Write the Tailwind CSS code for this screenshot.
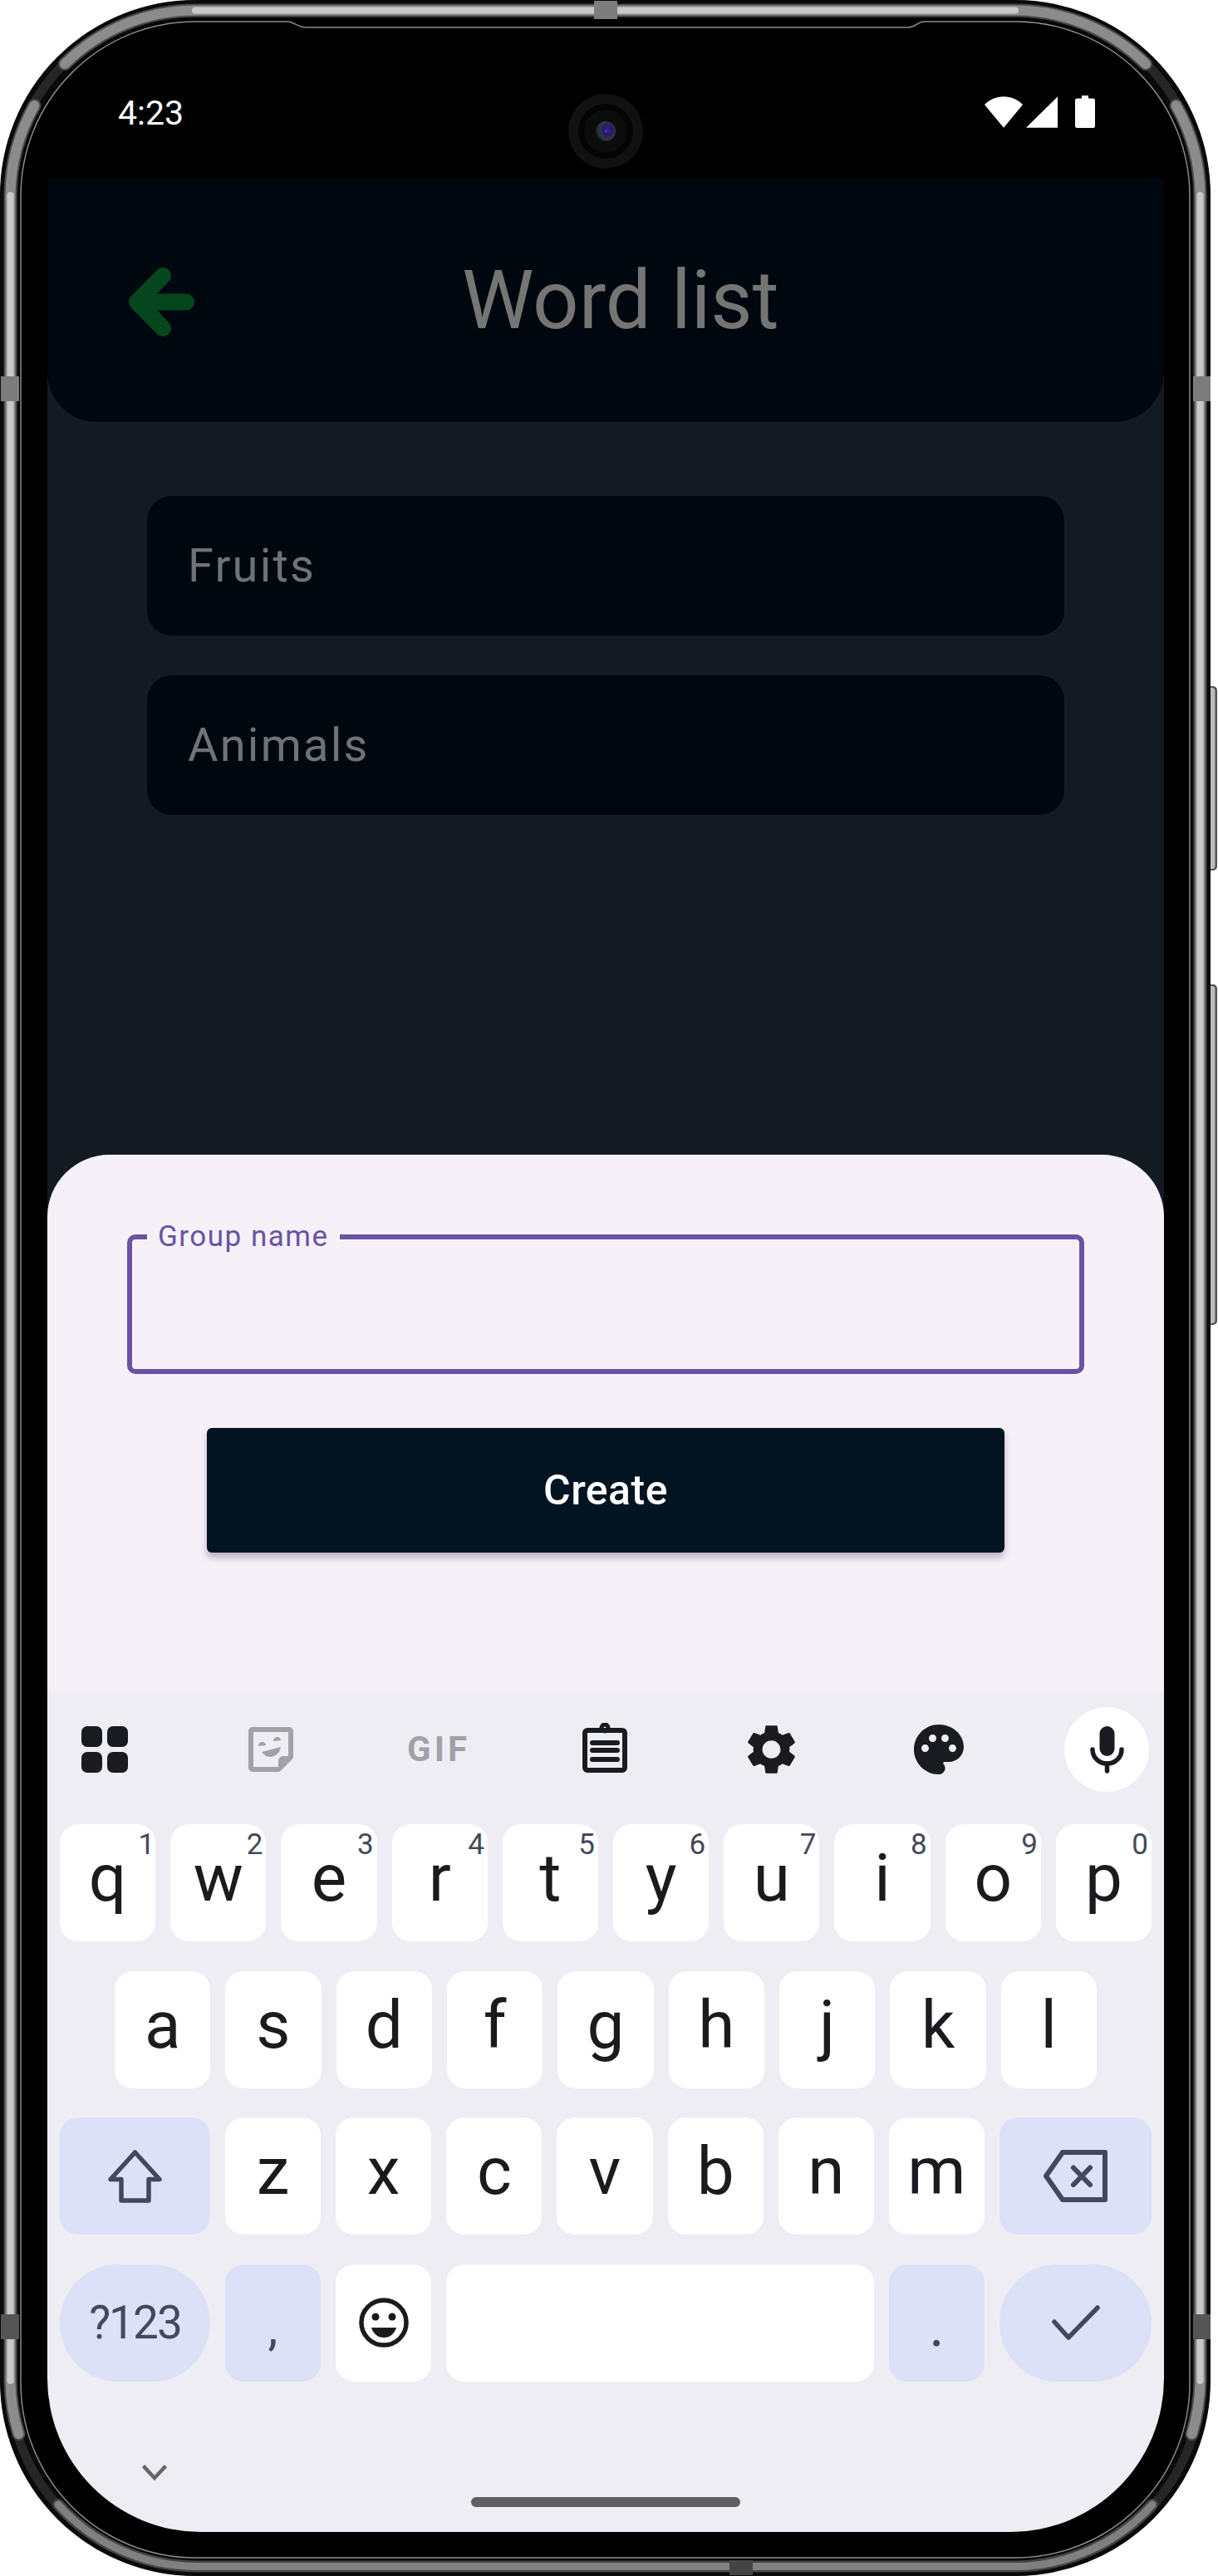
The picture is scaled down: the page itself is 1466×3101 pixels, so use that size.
<!doctype html>
<html lang="en">
  <head>
    <meta charset="UTF-8" />
    <title>Word list</title>
    <script src="https://cdn.jsdelivr.net/npm/@tailwindcss/browser@4"></script>
  </head>

  <body class="bg-white font-['Roboto',sans-serif]">
    <div class="relative w-[1466px] h-[3101px] overflow-hidden">
      <!-- phone frame -->
      <svg class="absolute inset-0" width="1466" height="3101" viewBox="0 0 1466 3101" fill="none">
        <!-- side buttons -->
        <rect x="1450" y="826" width="15" height="222" rx="5" fill="#555" />
        <rect x="1450" y="828" width="12.5" height="218" rx="4" fill="#bbb" />
        <rect x="1450" y="1185" width="15" height="410" rx="5" fill="#555" />
        <rect x="1450" y="1187" width="12.5" height="406" rx="4" fill="#bbb" />

        <rect x="0.5" y="0.5" width="1456" height="3100" rx="235" fill="#000" />
        <rect x="11.5" y="11.5" width="1434" height="3078" rx="223.5" stroke="#0a0a0a" stroke-width="23" />
        <rect x="11.5" y="11.5" width="1434" height="3078" rx="223.5" stroke="#262626" stroke-width="11" />

        <g stroke-linecap="round">
          <g stroke="#4a4a4a" stroke-width="16">
            <path d="M78 77A223.5 223.5 0 0 1 235 12.5H1222A223.5 223.5 0 0 1 1379 77" />
            <path d="M41.4 127A223.5 223.5 0 0 0 12.5 235V2866A223.5 223.5 0 0 0 22.4 2930" />
            <path d="M1415.6 127A223.5 223.5 0 0 1 1444.5 235V2866A223.5 223.5 0 0 1 1434.6 2930" />
          </g>
          <g stroke="#8c8c8c" stroke-width="12">
            <path d="M78 77A223.5 223.5 0 0 1 235 12.5H1222A223.5 223.5 0 0 1 1379 77" />
            <path d="M41.4 127A223.5 223.5 0 0 0 12.5 235V2866A223.5 223.5 0 0 0 22.4 2930" />
            <path d="M1415.6 127A223.5 223.5 0 0 1 1444.5 235V2866A223.5 223.5 0 0 1 1434.6 2930" />
          </g>
          <g stroke="#c8c8c8" stroke-width="8">
            <path d="M235 12.5H1222" />
            <path d="M12.5 235V2866" />
            <path d="M1444.5 235V2866" />
          </g>
          <path d="M70 3015A223.5 223.5 0 0 0 235 3089.5H1222A223.5 223.5 0 0 0 1387 3015" stroke="#444" stroke-width="14" />
          <path d="M70 3015A223.5 223.5 0 0 0 235 3089.5H1222A223.5 223.5 0 0 0 1387 3015" stroke="#808080" stroke-width="9" />
        </g>

        <!-- antenna joints -->
        <rect x="715" y="1" width="28" height="22" fill="#7d7d7d" />
        <rect x="1" y="453" width="22" height="30" fill="#7d7d7d" />
        <rect x="1436" y="453" width="21" height="30" fill="#7d7d7d" />
        <rect x="1" y="2786" width="22" height="30" fill="#555" />
        <rect x="1436" y="2786" width="21" height="30" fill="#555" />
        <rect x="878" y="3082" width="28" height="18" fill="#444" />

        <!-- inner hairline with the top notch -->
        <path
          d="M25 235A210 210 0 0 1 235 26H346C354 26 358 33 369 33H1093C1103 33 1104 26 1112 26H1222A210 210 0 0 1 1432 235V2869A210 210 0 0 1 1222 3079H235A210 210 0 0 1 25 2869Z"
          stroke="#8a8a8a"
          stroke-width="1.5"
        />
      </svg>

      <div class="relative w-[1457px] h-[3101px] flex flex-col pl-[57px] pr-[56px] pb-[53px]">
        <!-- status bar -->
        <div class="relative -ml-[57px] -mr-[56px] h-[215px] shrink-0 flex items-start pl-[142px] pr-[139px] text-white">
          <span class="mt-[112px] text-[41px] leading-[48px]">4:23</span>
          <svg class="absolute left-[684px] top-[113px]" width="90" height="90" viewBox="0 0 90 90">
            <defs>
              <radialGradient id="lens" cx="0.6" cy="0.45" r="0.6">
                <stop offset="0" stop-color="#3a1fb0" />
                <stop offset="0.35" stop-color="#2a1a5c" />
                <stop offset="0.75" stop-color="#2a3a48" />
                <stop offset="1" stop-color="#141c20" />
              </radialGradient>
            </defs>
            <circle cx="45" cy="45" r="45" fill="#111" />
            <circle cx="45" cy="45" r="33" fill="#040404" />
            <circle cx="45" cy="45" r="26" fill="#0c0c0c" />
            <circle cx="45" cy="45" r="12" fill="url(#lens)" />
            <circle cx="45" cy="45" r="1.5" fill="#4a2de0" />
          </svg>
          <div class="ml-auto mt-[115px] flex items-start">
            <svg class="mt-[1px]" width="46" height="38" viewBox="0 0 45.5 37" fill="#fff">
              <path d="M22.75 37L0 9.5C6 3.5 14 0 22.75 0C31.5 0 39.5 3.5 45.5 9.5Z" />
            </svg>
            <svg class="ml-[4px] mt-[1px]" width="38" height="38" viewBox="0 0 37.5 37" fill="#fff">
              <path d="M37.5 0V37H0Z" />
            </svg>
            <svg class="ml-[21px]" width="24" height="39" viewBox="0 0 24 39" fill="#fff">
              <path d="M8 0H16V3.5H21.5A2.5 2.5 0 0 1 24 6V36.5A2.5 2.5 0 0 1 21.5 39H2.5A2.5 2.5 0 0 1 0 36.5V6A2.5 2.5 0 0 1 2.5 3.5H8Z" />
            </svg>
          </div>
        </div>

        <!-- screen -->
        <div class="flex-1 flex flex-col overflow-hidden rounded-b-[185px] bg-[#131a22]">
          <!-- app bar -->
          <div class="h-[293px] shrink-0 flex items-center pl-[98px] rounded-b-[60px] bg-[#00070e]">
            <svg class="mb-[-3px]" width="79" height="83" viewBox="0 0 79 83" fill="none" stroke="#05461e" stroke-width="20" stroke-linecap="round" stroke-linejoin="round">
              <path d="M41 10L10 41.5L41 73" />
              <path d="M10 41.5H69" />
            </svg>
            <span class="ml-[322px] text-[97.5px] leading-[112px] text-[#757575]">Word list</span>
          </div>

          <!-- word groups -->
          <div class="flex-1 flex flex-col gap-[48px] pt-[89px] pl-[120px] pr-[120px]">
            <div class="h-[168px] flex items-center pl-[49px] rounded-[30px] bg-[#00070e] text-[56px] tracking-[2.2px] text-[#6f7276]">Fruits</div>
            <div class="h-[168px] flex items-center pl-[49px] rounded-[30px] bg-[#00070e] text-[56px] tracking-[2.2px] text-[#6f7276]">Animals</div>
          </div>

          <!-- bottom sheet -->
          <div class="h-[650px] shrink-0 flex flex-col rounded-t-[75px] bg-[#f6f1f9]">
            <div class="relative mt-[96px] mx-[96px] h-[168px] rounded-[10px] border-[6px] border-[#6952a4]">
              <span class="absolute -top-[18px] left-[18px] px-[13px] bg-[#f6f1f9] text-[35px] leading-[30px] tracking-[1.5px] text-[#6952a4]">Group name</span>
            </div>
            <button class="mt-[65px] mx-auto w-[960px] h-[150px] rounded-[6px] bg-[#021322] text-white text-[50px] font-medium tracking-[0.5px] shadow-[0_6px_9px_rgba(40,30,70,0.3)]">Create</button>
            <div class="mt-auto h-[10px] bg-linear-to-b from-transparent to-[#eeedf3]"></div>
          </div>

          <!-- keyboard -->
          <div class="h-[1008px] shrink-0 flex flex-col bg-[#eeedf4] pt-[15px]">
            <div class="h-[102px] shrink-0 flex items-center mb-[39px]">
              <div class="ml-[41px] w-[56px] h-[56px] grid grid-cols-2 gap-[6px]">
                <div class="rounded-[7px] bg-[#1a1b20]"></div>
                <div class="rounded-[7px] bg-[#1a1b20]"></div>
                <div class="rounded-[7px] bg-[#1a1b20]"></div>
                <div class="rounded-[7px] bg-[#1a1b20]"></div>
              </div>
              <svg class="ml-[145px]" width="54" height="54" viewBox="0 0 54 54" fill="#a2a1a8">
                <path fill-rule="evenodd" d="M5 0H49A5 5 0 0 1 54 5V36A4 4 0 0 1 53 38.5L39 52.5A4 4 0 0 1 36 54H5A5 5 0 0 1 0 49V5A5 5 0 0 1 5 0ZM6 6V48H36V41A6 6 0 0 1 42 35H48V6Z" />
                <path d="M16 30L39 24C38 32 31 36 26 36C22 36 18 33 16 30Z" />
                <path d="M12 23C12 19 15 18 17 18C19 18 21 20 21 22Z" />
                <path d="M30 17C30 14 33 12 35 12C37 12 39 14 39 16Z" />
              </svg>
              <span class="ml-[137px] w-[72px] text-center text-[42px] leading-[30px] font-bold tracking-[4px] text-[#a2a1a8]">GIF</span>
              <svg class="ml-[139px] -mt-[4px]" width="54" height="60" viewBox="0 0 54 60" fill="none" stroke="#1a1b20" stroke-width="6" stroke-linecap="round">
                <rect x="3" y="9" width="48" height="48" rx="3" />
                <path d="M12 24H42M12 33H42M12 44H42" />
                <path d="M16 9H38" />
                <circle cx="27" cy="6" r="4" stroke-width="5" />
              </svg>
              <svg class="ml-[145px]" width="57" height="60" viewBox="2.6 2 18.8 20" preserveAspectRatio="none" fill="#1a1b20">
                <path d="M19.14 12.94c.04-.3.06-.61.06-.94 0-.32-.02-.64-.07-.94l2.03-1.58c.18-.14.23-.41.12-.61l-1.92-3.32c-.12-.22-.37-.29-.59-.22l-2.39.96c-.5-.38-1.03-.7-1.62-.94l-.36-2.54c-.04-.24-.24-.41-.48-.41h-3.84c-.24 0-.43.17-.47.41l-.36 2.54c-.59.24-1.13.57-1.62.94l-2.39-.96c-.22-.08-.47 0-.59.22L2.74 8.87c-.12.21-.08.47.12.61l2.03 1.58c-.05.3-.09.63-.09.94s.02.64.07.94l-2.03 1.58c-.18.14-.23.41-.12.61l1.92 3.32c.12.22.37.29.59.22l2.39-.96c.5.38 1.03.7 1.62.94l.36 2.54c.05.24.24.41.48.41h3.84c.24 0 .44-.17.47-.41l.36-2.54c.59-.24 1.13-.56 1.62-.94l2.39.96c.22.08.47 0 .59-.22l1.92-3.32c.12-.22.07-.47-.12-.61l-2.01-1.58zM12 15.6c-1.98 0-3.6-1.62-3.6-3.6s1.62-3.6 3.6-3.6 3.6 1.62 3.6 3.6-1.62 3.6-3.6 3.6z" />
              </svg>
              <svg class="ml-[143px]" width="60" height="60" viewBox="2 2 20 20" fill="#1a1b20">
                <path d="M12 2C6.49 2 2 6.49 2 12s4.49 10 10 10c1.38 0 2.5-1.12 2.5-2.5 0-.61-.23-1.2-.64-1.67-.08-.1-.13-.21-.13-.33 0-.28.22-.5.5-.5H16c3.31 0 6-2.69 6-6 0-4.96-4.49-9-10-9zm-5.5 11c-.83 0-1.5-.67-1.5-1.5S5.67 10 6.5 10s1.5.67 1.5 1.5S7.33 13 6.5 13zm3-4C8.67 9 8 8.33 8 7.5S8.67 6 9.5 6s1.5.67 1.5 1.5S10.33 9 9.5 9zm5 0c-.83 0-1.5-.67-1.5-1.5S13.67 6 14.5 6s1.5.67 1.5 1.5S15.33 9 14.5 9zm3 4c-.83 0-1.5-.67-1.5-1.5s.67-1.5 1.5-1.5 1.5.67 1.5 1.5-.67 1.5-1.5 1.5z" />
              </svg>
              <div class="ml-[121px] w-[102px] h-[102px] flex items-center justify-center rounded-full bg-white">
                <svg width="41" height="57" viewBox="0 0 41 57" fill="none" stroke="#1a1b20" stroke-linecap="round">
                  <rect x="11.5" y="0" width="18" height="36" rx="9" fill="#1a1b20" stroke="none" />
                  <path d="M3 28C3 38 11 45 20.5 45C30 45 38 38 38 28" stroke-width="5.5" />
                  <path d="M20.5 45V54" stroke-width="5.5" />
                </svg>
              </div>
            </div>

            <!-- keys -->
            <div class="flex flex-col gap-[35.5px] px-[15px] text-[#1b1b1f]">
              <div class="grid grid-cols-10 gap-[18px]">
                <div class="relative h-[141px] flex justify-center rounded-[22px] bg-white text-[80px] leading-[131px]">q<span class="absolute top-[5px] right-[1px] text-[35px] leading-[40px] text-[#45485a]">1</span></div>
                <div class="relative h-[141px] flex justify-center rounded-[22px] bg-white text-[80px] leading-[131px]">w<span class="absolute top-[5px] right-[4px] text-[35px] leading-[40px] text-[#45485a]">2</span></div>
                <div class="relative h-[141px] flex justify-center rounded-[22px] bg-white text-[80px] leading-[131px]">e<span class="absolute top-[5px] right-[4px] text-[35px] leading-[40px] text-[#45485a]">3</span></div>
                <div class="relative h-[141px] flex justify-center rounded-[22px] bg-white text-[80px] leading-[131px]">r<span class="absolute top-[5px] right-[4px] text-[35px] leading-[40px] text-[#45485a]">4</span></div>
                <div class="relative h-[141px] flex justify-center rounded-[22px] bg-white text-[80px] leading-[131px]">t<span class="absolute top-[5px] right-[4px] text-[35px] leading-[40px] text-[#45485a]">5</span></div>
                <div class="relative h-[141px] flex justify-center rounded-[22px] bg-white text-[80px] leading-[131px]">y<span class="absolute top-[5px] right-[4px] text-[35px] leading-[40px] text-[#45485a]">6</span></div>
                <div class="relative h-[141px] flex justify-center rounded-[22px] bg-white text-[80px] leading-[131px]">u<span class="absolute top-[5px] right-[4px] text-[35px] leading-[40px] text-[#45485a]">7</span></div>
                <div class="relative h-[141px] flex justify-center rounded-[22px] bg-white text-[80px] leading-[131px]">i<span class="absolute top-[5px] right-[4px] text-[35px] leading-[40px] text-[#45485a]">8</span></div>
                <div class="relative h-[141px] flex justify-center rounded-[22px] bg-white text-[80px] leading-[131px]">o<span class="absolute top-[5px] right-[4px] text-[35px] leading-[40px] text-[#45485a]">9</span></div>
                <div class="relative h-[141px] flex justify-center rounded-[22px] bg-white text-[80px] leading-[131px]">p<span class="absolute top-[5px] right-[4px] text-[35px] leading-[40px] text-[#45485a]">0</span></div>
              </div>

              <div class="grid grid-cols-9 gap-[18px] px-[66px]">
                <div class="h-[141px] flex justify-center rounded-[22px] bg-white text-[80px] leading-[131px]">a</div>
                <div class="h-[141px] flex justify-center rounded-[22px] bg-white text-[80px] leading-[131px]">s</div>
                <div class="h-[141px] flex justify-center rounded-[22px] bg-white text-[80px] leading-[131px]">d</div>
                <div class="h-[141px] flex justify-center rounded-[22px] bg-white text-[80px] leading-[131px]">f</div>
                <div class="h-[141px] flex justify-center rounded-[22px] bg-white text-[80px] leading-[131px]">g</div>
                <div class="h-[141px] flex justify-center rounded-[22px] bg-white text-[80px] leading-[131px]">h</div>
                <div class="h-[141px] flex justify-center rounded-[22px] bg-white text-[80px] leading-[131px]">j</div>
                <div class="h-[141px] flex justify-center rounded-[22px] bg-white text-[80px] leading-[131px]">k</div>
                <div class="h-[141px] flex justify-center rounded-[22px] bg-white text-[80px] leading-[131px]">l</div>
              </div>

              <div class="grid grid-cols-[181px_repeat(7,1fr)_183px] gap-[18px]">
                <div class="h-[141px] flex items-center justify-center rounded-[22px] bg-[#dde1f7]">
                  <svg width="67" height="65" viewBox="0 0 67 65" fill="none" stroke="#45485a" stroke-width="5.5" stroke-linejoin="round">
                    <path d="M33.5 4L63 36.5H50V62H17V36.5H4Z" />
                  </svg>
                </div>
                <div class="h-[141px] flex justify-center rounded-[22px] bg-white text-[80px] leading-[131px]">z</div>
                <div class="h-[141px] flex justify-center rounded-[22px] bg-white text-[80px] leading-[131px]">x</div>
                <div class="h-[141px] flex justify-center rounded-[22px] bg-white text-[80px] leading-[131px]">c</div>
                <div class="h-[141px] flex justify-center rounded-[22px] bg-white text-[80px] leading-[131px]">v</div>
                <div class="h-[141px] flex justify-center rounded-[22px] bg-white text-[80px] leading-[131px]">b</div>
                <div class="h-[141px] flex justify-center rounded-[22px] bg-white text-[80px] leading-[131px]">n</div>
                <div class="h-[141px] flex justify-center rounded-[22px] bg-white text-[80px] leading-[131px]">m</div>
                <div class="h-[141px] flex items-center justify-center rounded-[22px] bg-[#dde1f7]">
                  <svg width="77" height="63" viewBox="0 0 77 63" fill="none" stroke="#45485a" stroke-width="6" stroke-linecap="round" stroke-linejoin="round">
                    <path d="M23 3H74V60H23L3 31.5Z" />
                    <path d="M36 21.5L56 42M56 21.5L36 42" />
                  </svg>
                </div>
              </div>

              <div class="grid grid-cols-[181px_115px_115px_1fr_115px_183px] gap-[18px]">
                <div class="h-[141px] flex items-center justify-center rounded-[70px] bg-[#dde1f7] text-[55px] tracking-[-2px] text-[#45485a]">?123</div>
                <div class="h-[141px] flex justify-center rounded-[22px] bg-[#dde1f7] text-[60px] leading-[152px] text-[#45485a]">,</div>
                <div class="h-[141px] flex items-center justify-center rounded-[22px] bg-white">
                  <svg width="60" height="60" viewBox="0 0 60 60" fill="#1b1b1f">
                    <circle cx="30" cy="30" r="27" fill="none" stroke="#1b1b1f" stroke-width="5.5" />
                    <circle cx="20" cy="23" r="4.5" />
                    <circle cx="40" cy="23" r="4.5" />
                    <path d="M15 36H45C45 36 42 48 30 48C18 48 15 36 15 36Z" />
                  </svg>
                </div>
                <div class="h-[141px] rounded-[22px] bg-white"></div>
                <div class="h-[141px] flex justify-center rounded-[22px] bg-[#dde1f7] text-[70px] leading-[149px] text-[#45485a]">.</div>
                <div class="h-[141px] flex items-center justify-center rounded-[70px] bg-[#dde1f7]">
                  <svg width="58" height="42" viewBox="0 0 58 42" fill="none" stroke="#45485a" stroke-width="5.5" stroke-linecap="round" stroke-linejoin="round">
                    <path d="M3 20L20 39L55 3" />
                  </svg>
                </div>
              </div>
            </div>

            <!-- nav -->
            <div class="flex flex-col pt-[100px]">
              <svg class="ml-[114px]" width="30" height="19" viewBox="0 0 30 19" fill="none" stroke="#666" stroke-width="4.5">
                <path d="M1.5 1.5L15 16L28.5 1.5" />
              </svg>
              <div class="mt-[20px] mx-auto w-[324px] h-[12px] rounded-full bg-[#606062]"></div>
            </div>
          </div>
        </div>
      </div>
    </div>
  </body>
</html>
